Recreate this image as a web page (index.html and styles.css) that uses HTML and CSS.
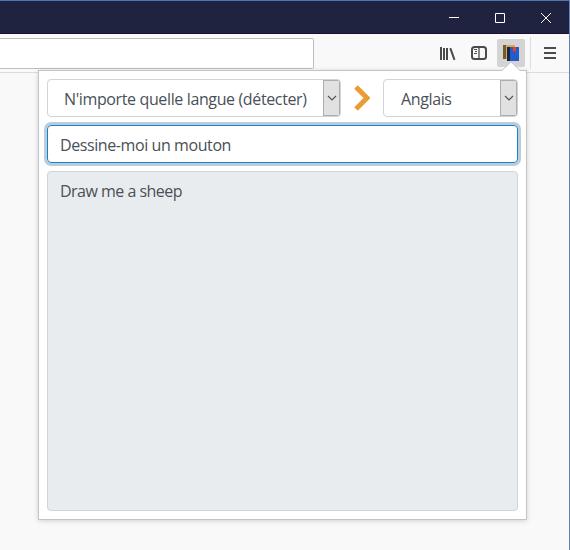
FILE: index.html
```html
<!DOCTYPE html>
<html lang="fr">
<head>
<meta charset="utf-8">
<title>Traduction</title>
<link rel="stylesheet" href="styles.css">
</head>
<body>
<div class="window">
  <header class="titlebar">
    <svg class="caption" viewBox="0 0 46 32"><path d="M17 16.500h10"/></svg>
    <svg class="caption" viewBox="0 0 46 32"><path d="M17.500 12.500h9v9h-9z"/></svg>
    <svg class="caption" viewBox="0 0 46 32"><path d="M17 12l10 10M27 12L17 22"/></svg>
  </header>
  <nav class="toolbar">
    <div class="address"></div>
    <svg class="icon library" viewBox="0 0 16 16"><path d="M1 2v13M4 3v12M7 3v12M10.300 3.200L14.500 14.800"/></svg>
    <svg class="icon sidebar" viewBox="0 0 16 16"><rect x="1" y="2" width="14" height="12" rx="2.500"/><path class="divider" d="M8 2v12"/><path class="thin" d="M3 4.500h3M4 6.500h2M3 8.500h3"/></svg>
    <div class="extension">
      <svg class="books" viewBox="0 0 16 16"><path fill="#7c5b2b" d="M0 0h4v14H0z"/><path fill="#dca850" d="M3 0h9v14H3z"/><path fill="#12284f" d="M4 2h3v14H4z"/><path fill="#235bc9" d="M7 2h9v14H7z"/><path fill="#f33b2c" d="M10 2h3v5l-1.500-1.300L10 7z"/></svg>
    </div>
    <div class="separator"></div>
    <svg class="icon menu" viewBox="0 0 16 16"><path d="M2 3h12M2 8h12M2 13h12"/></svg>
  </nav>
  <main class="popup">
    <svg class="pointer" viewBox="0 0 20 11"><path fill="#fff" d="M0 11V10L10 1l10 9v1z"/><path fill="none" stroke="#c4c4c4" d="M0 9.500h1L10 .8l9 8.700h1"/></svg>
    <div class="languages">
      <div class="select source"><span class="label">N'importe quelle langue (détecter)</span><span class="arrow"><svg viewBox="0 0 10 6"><path d="M1 1l4 4 4-4"/></svg></span></div>
      <svg class="direction" viewBox="0 0 16 26"><path d="M2 2l11 11L2 24"/></svg>
      <div class="select target"><span class="label">Anglais</span><span class="arrow"><svg viewBox="0 0 10 6"><path d="M1 1l4 4 4-4"/></svg></span></div>
    </div>
    <div class="field"><span class="phrase">Dessine-moi un mouton</span></div>
    <div class="result"><span class="translation">Draw me a sheep</span></div>
  </main>
</div>
</body>
</html>
```
FILE: styles.css
```css
* { box-sizing: border-box; }
body {
  margin: 0;
  font: 16px/24px "Segoe UI", "Open Sans", "Noto Sans", sans-serif;
  color: #495057;
}
svg { display: block; flex: none; }
.window {
  position: relative;
  width: 570px;
  height: 550px;
  overflow: hidden;
  background: #f9f9fa;
  border-top: 1px solid #4b78b2;
  border-right: 1px solid #6383b8;
}
.titlebar {
  display: flex;
  justify-content: flex-end;
  height: 33px;
  margin-right: -1px;
  background: #202340;
  border-bottom: 1px solid #1b112e;
}
.caption {
  width: 46px;
  height: 32px;
  fill: none;
  stroke: #fff;
}
.toolbar {
  display: flex;
  align-items: center;
  height: 39px;
  border-bottom: 1px solid #dcdcdc;
}
.address {
  width: 314px;
  height: 31px;
  border: 1px solid #bdbdbd;
  border-left: 0;
  border-radius: 0 2px 2px 0;
  background: #fff;
  margin-right: 126px;
}
.icon { width: 16px; height: 16px; fill: none; stroke: #4b4b4d; stroke-width: 2; }
.library { margin-right: 15px; }
.sidebar { margin-right: 10px; }
.sidebar .thin, .sidebar .divider { stroke-width: 1.3; }
.sidebar .thin { stroke-width: 1; }
.extension {
  width: 28px;
  height: 28px;
  padding: 6px;
  border-radius: 2px;
  background: #d4d4d5;
}
.books { width: 16px; height: 16px; }
.separator { width: 1px; height: 32px; background: #dedede; margin: 0 11px 0 5px; }
.popup {
  position: absolute;
  left: 38px;
  top: 69px;
  width: 489px;
  height: 450px;
  padding: 8px;
  background: #fff;
  border: 1px solid #c4c4c4;
  box-shadow: 0 1px 5px rgba(0, 0, 0, .16);
}
.pointer { position: absolute; left: 462px; top: -10px; width: 20px; height: 11px; }
.languages { display: flex; height: 38px; align-items: center; }
.select {
  display: flex;
  flex: none;
  height: 38px;
  border: 1px solid #ced4da;
  border-radius: 4px;
  overflow: hidden;
  white-space: nowrap;
}
.source { width: 294px; }
.target { width: 135px; }
.label { flex: 1; padding: 7px 0 0 16px; letter-spacing: -.37px; }
.target .label { padding-left: 17px; }
.arrow {
  display: grid;
  flex: none;
  place-items: center;
  width: 17px;
  height: 36px;
  background: #e1e1e1;
  border: 1px solid #adadad;
}
.arrow svg { width: 10px; height: 6px; fill: none; stroke: #555; stroke-width: 1.2; }
.direction { width: 16px; height: 26px; margin: 0 13px 0 13px; fill: none; stroke: #eb9b34; stroke-width: 5; }
.field, .result {
  padding: 7px 12px;
  border: 1px solid #ced4da;
  border-radius: 4px;
}
.field {
  height: 38px;
  margin: 8px 0;
  border-color: #1683d1;
  box-shadow: 0 0 0 3px #bdcdd8;
}
.result { height: 340px; background: #e9ecef; }
.phrase { letter-spacing: -.41px; }
.translation { letter-spacing: -.52px; }
```
